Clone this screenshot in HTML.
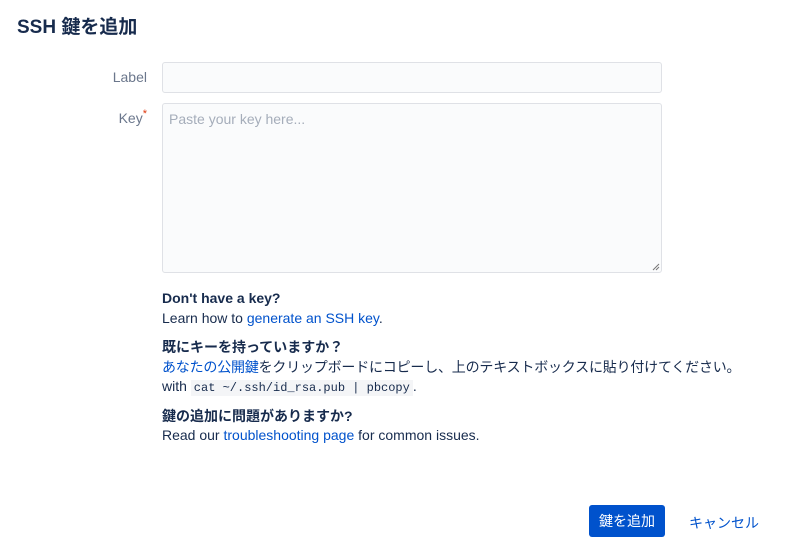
<!DOCTYPE html>
<html><head><meta charset="utf-8"><style>
body{margin:0;background:#fff;font-family:"Liberation Sans","Noto Sans CJK JP",sans-serif;color:#172b4d;width:793px;height:559px;position:relative;overflow:hidden;font-size:14px}
.a{position:absolute;white-space:nowrap}
h1{position:absolute;left:17px;top:14px;margin:0;font-size:19px;font-weight:600;line-height:28px;color:#172b4d}
.lbl{color:#6b778c;font-size:14px;text-align:right}
.in{position:absolute;background:#fafbfc;border:1px solid #dfe1e6;border-radius:3px;box-sizing:border-box}
a{color:#0052cc;text-decoration:none}
b{font-weight:bold}
code{font-family:"Liberation Mono",monospace;font-size:12px;background:#f4f5f7;padding:1px 3px}
.btn{position:absolute;left:589px;top:505px;width:76px;height:32px;background:#0052cc;color:#fff;border-radius:3px;text-align:center;line-height:32px;font-size:14px}
</style></head><body>
<h1>SSH 鍵を追加</h1>
<div class="a lbl" style="left:110px;top:69px;width:37px">Label</div>
<div class="in" style="left:162px;top:62px;width:500px;height:31px"></div>
<div class="a lbl" style="left:110px;top:110px;width:37px">Key<span style="color:#de350b;font-size:11px;position:relative;top:-6px">*</span></div>
<div class="in" style="left:162px;top:103px;width:500px;height:170px"><div class="a" style="left:6px;top:7px;color:#a5adba">Paste your key here...</div>
<svg class="a" style="right:1px;bottom:1px" width="8" height="8"><path d="M7 1L1 7M7 4L4 7" stroke="#777" stroke-width="1"/></svg></div>
<div class="a" style="left:162px;top:290px"><b>Don't have a key?</b></div>
<div class="a" style="left:162px;top:310px">Learn how to <a>generate an SSH key</a>.</div>
<div class="a" style="left:162px;top:337px"><b>既にキーを持っていますか？</b></div>
<div class="a" style="left:162px;top:357px;letter-spacing:-0.2px"><a>あなたの公開鍵</a>をクリップボードにコピーし、上のテキストボックスに貼り付けてください。</div>
<div class="a" style="left:162px;top:378px">with <code>cat ~/.ssh/id_rsa.pub | pbcopy</code>.</div>
<div class="a" style="left:162px;top:406px"><b>鍵の追加に問題がありますか?</b></div>
<div class="a" style="left:162px;top:427px">Read our <a>troubleshooting page</a> for common issues.</div>
<div class="btn">鍵を追加</div>
<div class="a" style="left:689px;top:513px;color:#0052cc">キャンセル</div>
</body></html>
